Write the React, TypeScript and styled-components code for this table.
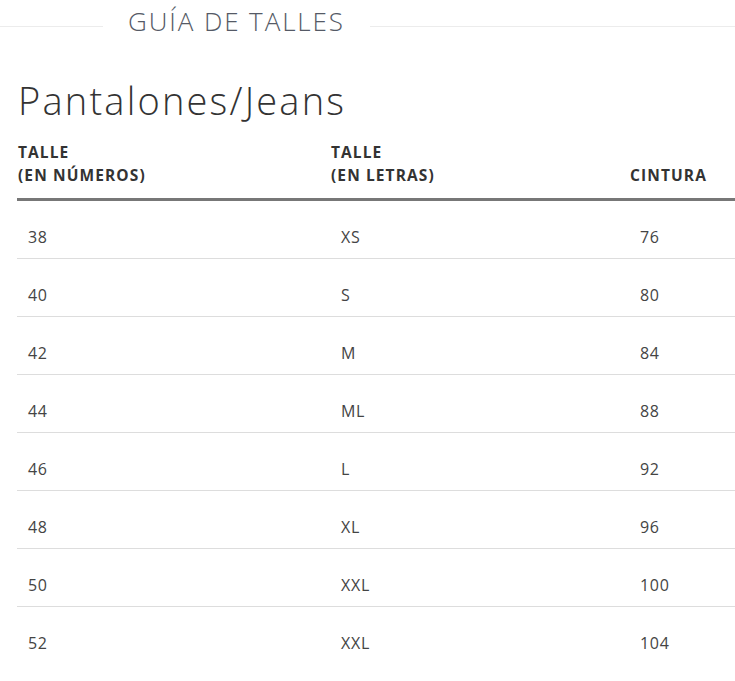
import React from "react";
import styled, { createGlobalStyle } from "styled-components";

const Global = createGlobalStyle`
  html, body { margin: 0; padding: 0; background: #fff; }
  body { font-family: "Open Sans", "Liberation Sans", sans-serif; color: #333; }
`;

const Page = styled.div`
  width: 735px;
  display: flex;
  flex-direction: column;
`;

const Banner = styled.div`
  display: flex;
  align-items: center;
  height: 42px;
  gap: 25px;
`;

const Rule = styled.div<{ $w?: number }>`
  height: 1px;
  background: #ececec;
  margin-top: 10px;
  ${(p) => (p.$w ? `width: ${p.$w}px; flex: none;` : "flex: 1;")}
`;

const BannerTitle = styled.h2`
  margin: 0;
  font-weight: 300;
  font-size: 26px;
  letter-spacing: 1.9px;
  color: #555a66;
  white-space: nowrap;
`;

const Section = styled.section`
  padding-left: 17px;
`;

const Heading = styled.h1`
  margin: 30px 0 0 1px;
  font-weight: 300;
  font-size: 38px;
  line-height: 56px;
  color: #333;
  letter-spacing: 2.2px;
`;

const Table = styled.table`
  width: 718px;
  table-layout: fixed;
  border-collapse: collapse;
  margin-top: 13px;
`;

const Th = styled.th<{ $w: number }>`
  box-sizing: border-box;
  width: ${(p) => p.$w}px;
  text-align: left;
  vertical-align: bottom;
  font-weight: 700;
  font-size: 15.5px;
  line-height: 23px;
  color: #333;
  padding: 0 0 11px 1px;
  border-bottom: 3px solid #777;
  letter-spacing: 1.1px;
`;

const Td = styled.td`
  font-size: 16px;
  letter-spacing: 0.7px;
  color: #444;
  height: 43px;
  padding: 14px 0 0 11px;
  border-bottom: 1px solid #ddd;
  vertical-align: middle;
`;

const Row = styled.tr`
  &:last-child td { border-bottom: none; }
`;

const rows: [string, string, string][] = [
  ["38", "XS", "76"],
  ["40", "S", "80"],
  ["42", "M", "84"],
  ["44", "ML", "88"],
  ["46", "L", "92"],
  ["48", "XL", "96"],
  ["50", "XXL", "100"],
  ["52", "XXL", "104"],
];

export default function App() {
  return (
    <Page>
      <Global />
      <Banner>
        <Rule $w={103} />
        <BannerTitle>GUÍA DE TALLES</BannerTitle>
        <Rule />
      </Banner>
      <Section>
        <Heading>Pantalones/Jeans</Heading>
        <Table>
          <thead>
            <tr>
              <Th $w={313}>TALLE<br />(EN NÚMEROS)</Th>
              <Th $w={299}>TALLE<br />(EN LETRAS)</Th>
              <Th $w={106}>CINTURA</Th>
            </tr>
          </thead>
          <tbody>
            {rows.map((r, i) => (
              <Row key={i}>
                <Td>{r[0]}</Td>
                <Td>{r[1]}</Td>
                <Td>{r[2]}</Td>
              </Row>
            ))}
          </tbody>
        </Table>
      </Section>
    </Page>
  );
}
